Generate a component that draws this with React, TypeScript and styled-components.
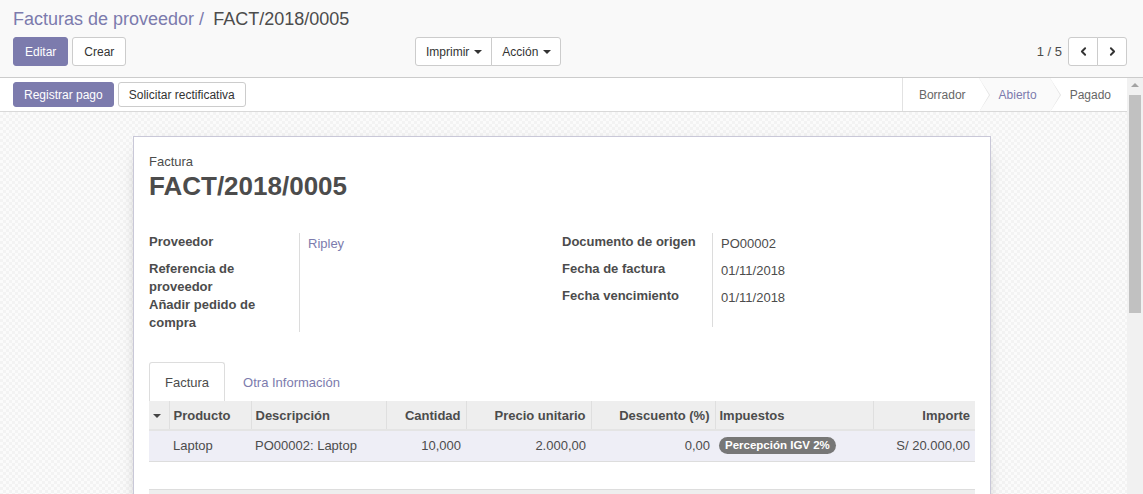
import React from "react";
import styled, { createGlobalStyle } from "styled-components";
import { ChevronLeft, ChevronRight } from "lucide-react";

const GlobalStyle = createGlobalStyle`
  html, body {
    margin: 0;
    padding: 0;
    height: 100%;
    overflow: hidden;
  }
  body {
    font-family: "Liberation Sans", Arial, sans-serif;
    font-size: 13px;
    color: #4c4c4c;
    background: #fff;
  }
  * { box-sizing: border-box; }
`;

const primary = "#7c7bad";

const Page = styled.div`
  height: 100vh;
  display: flex;
  flex-direction: column;
  overflow: hidden;
`;

const ControlPanel = styled.div`
  background: #f9f9f9;
  border-bottom: 1px solid #cccccc;
  padding: 7px 16px 11px 13px;
  flex: 0 0 auto;
`;

const Breadcrumb = styled.div`
  font-size: 18px;
  line-height: 24px;
  height: 24px;
  white-space: nowrap;
`;

const Crumb = styled.span<{ $active?: boolean }>`
  color: ${(p) => (p.$active ? "#4c4c4c" : primary)};
`;

const CrumbSep = styled.span`
  color: ${primary};
  padding: 0 9px 0 5px;
`;

const ButtonRow = styled.div`
  margin-top: 6px;
  display: grid;
  grid-template-columns: 402px auto 1fr auto;
  align-items: center;
  height: 29px;
`;

const Group = styled.div`
  display: flex;
  gap: 4px;
`;

const Btn = styled.button<{ $primary?: boolean; $small?: boolean }>`
  font-family: inherit;
  font-size: 12px;
  height: ${(p) => (p.$small ? "25px" : "29px")};
  padding: ${(p) => (p.$small ? "0 10px" : "0 11px")};
  border-radius: 3px;
  border: 1px solid ${(p) => (p.$primary ? primary : "#cccccc")};
  background: ${(p) => (p.$primary ? primary : "#ffffff")};
  color: ${(p) => (p.$primary ? "#ffffff" : "#333333")};
  display: inline-flex;
  align-items: center;
  gap: 4px;
  cursor: pointer;
  white-space: nowrap;
`;

const BtnGroup = styled.div`
  display: flex;
  & > button {
    border-radius: 0;
  }
  & > button + button {
    margin-left: -1px;
  }
  & > button:first-child {
    border-radius: 3px 0 0 3px;
  }
  & > button:last-child {
    border-radius: 0 3px 3px 0;
  }
`;

const Caret = styled.span`
  display: inline-block;
  width: 0;
  height: 0;
  margin-left: 1px;
  border-top: 4px solid #333;
  border-left: 4px solid transparent;
  border-right: 4px solid transparent;
`;

const DropBtn = styled(Btn)`
  padding: 0 9px 0 10px;
`;

const Pager = styled.div`
  grid-column: 4;
  display: flex;
  align-items: center;
  gap: 6px;
  color: #4c4c4c;
`;

const PagerBtn = styled(Btn)`
  width: 30px;
  padding: 0;
  justify-content: center;
`;

const Body = styled.div`
  flex: 1;
  display: flex;
  min-height: 0;
`;

const Main = styled.div`
  flex: 1;
  display: flex;
  flex-direction: column;
  min-width: 0;
`;

const StatusBar = styled.div`
  height: 34px;
  border-bottom: 1px solid #d9d9d9;
  background: #ffffff;
  display: flex;
  align-items: center;
  justify-content: space-between;
  padding-left: 13px;
`;

const StatusSteps = styled.div`
  display: flex;
  height: 100%;
  border-left: 1px solid #e2e2e2;
`;

const Step = styled.div<{ $current?: boolean; $last?: boolean }>`
  position: relative;
  display: flex;
  align-items: center;
  height: 100%;
  padding: ${(p) => (p.$last ? "0 16px 0 22px" : "0 13px 0 16px")};
  font-size: 12px;
  color: ${(p) => (p.$current ? primary : "#666666")};
  background: ${(p) => (p.$current ? "#fafafa" : "#ffffff")};
  & + & {
    padding-left: 20px;
  }
  ${(p) =>
    !p.$last &&
    `
    &::after, &::before {
      content: "";
      position: absolute;
      top: 0;
      width: 0;
      height: 0;
      border-top: 17px solid transparent;
      border-bottom: 17px solid transparent;
      z-index: 1;
    }
    &::before {
      right: -11px;
      border-left: 11px solid #e2e2e2;
    }
    &::after {
      right: -10px;
      border-left: 10px solid ${p.$current ? "#fafafa" : "#ffffff"};
    }
  `}
`;

const SheetBg = styled.div`
  flex: 1;
  padding: 24px 3px 0 0;
  background-color: #fafafa;
  background-image: repeating-conic-gradient(#f3f3f3 0 25%, #fbfbfb 0 50%);
  background-size: 6px 6px;
  overflow: hidden;
`;

const Sheet = styled.div`
  width: 858px;
  margin: 0 auto;
  min-height: 500px;
  background: #ffffff;
  border: 1px solid #c9c8d8;
  box-shadow: 0 5px 20px -15px #000;
  padding: 16px 15px 0 15px;
`;

const DocType = styled.div`
  font-size: 13px;
  line-height: 18px;
`;

const DocTitle = styled.h1`
  margin: 0;
  font-size: 26px;
  line-height: 30px;
  font-weight: bold;
  color: #4c4c4c;
`;

const Groups = styled.div`
  margin-top: 32px;
  display: grid;
  grid-template-columns: 1fr 1fr;
`;

const FieldGroup = styled.div`
  display: grid;
  grid-template-columns: 150px 1fr;
  align-content: start;
`;

const Label = styled.div`
  font-weight: bold;
  line-height: 18px;
  padding-right: 10px;
`;

const Value = styled.div<{ $link?: boolean; $h?: number }>`
  border-left: 1px solid #dcdcdc;
  padding: 2px 0 0 8px;
  line-height: 18px;
  min-height: ${(p) => p.$h ?? 0}px;
  color: ${(p) => (p.$link ? primary : "#4c4c4c")};
`;

const Tabs = styled.div`
  margin-top: 30px;
  display: flex;
  height: 39px;
`;

const Tab = styled.div<{ $active?: boolean }>`
  display: flex;
  align-items: center;
  padding: 0 15px 0 15px;
  margin-right: 2px;
  border: 1px solid ${(p) => (p.$active ? "#dddddd" : "transparent")};
  border-bottom: none;
  border-radius: 3px 3px 0 0;
  background: #ffffff;
  color: ${(p) => (p.$active ? "#4c4c4c" : primary)};
`;

const Table = styled.table`
  width: 100%;
  border-collapse: collapse;
  table-layout: fixed;
`;

const Th = styled.th<{ $right?: boolean; $w: number }>`
  width: ${(p) => p.$w}px;
  height: 29px;
  background: #eeeeee;
  border-bottom: 2px solid #e4e4e4;
  border-left: 1px solid #dfdfdf;
  text-align: ${(p) => (p.$right ? "right" : "left")};
  padding: 0 5px 0 4px;
  font-weight: bold;
  white-space: nowrap;
  &:first-child {
    border-left: none;
  }
`;

const Td = styled.td<{ $right?: boolean }>`
  height: 31px;
  padding: 0 5px 0 4px;
  text-align: ${(p) => (p.$right ? "right" : "left")};
  white-space: nowrap;
`;

const DataRow = styled.tr`
  background: #eeeef6;
  border-bottom: 1px solid #dddddd;
`;

const EmptyRow = styled.tr`
  height: 28px;
`;

const FooterRow = styled.tr`
  height: 28px;
  background: #eeeeee;
  border-top: 1px solid #dddddd;
`;

const HeadCaret = styled(Caret)`
  margin: 0 0 2px 0;
  border-top-color: #444;
`;

const Badge = styled.span`
  display: inline-block;
  background: #777777;
  color: #ffffff;
  font-size: 11.5px;
  font-weight: bold;
  line-height: 17px;
  padding: 0 6px;
  border-radius: 9px;
`;

const ScrollTrack = styled.div`
  width: 16px;
  flex: 0 0 16px;
  background: #f1f1f1;
  display: flex;
  flex-direction: column;
  align-items: center;
`;

const ScrollArrow = styled.div`
  margin-top: 5px;
  width: 0;
  height: 0;
  border-bottom: 4px solid #a3a3a3;
  border-left: 4px solid transparent;
  border-right: 4px solid transparent;
`;

const ScrollThumb = styled.div`
  margin-top: 8px;
  width: 12px;
  height: 218px;
  background: #c1c1c1;
`;

const columns = [
  { key: "caret", label: "", w: 20 },
  { key: "product", label: "Producto", w: 82 },
  { key: "desc", label: "Descripción", w: 135 },
  { key: "qty", label: "Cantidad", w: 80, right: true },
  { key: "price", label: "Precio unitario", w: 125, right: true },
  { key: "disc", label: "Descuento (%)", w: 124, right: true },
  { key: "tax", label: "Impuestos", w: 158 },
  { key: "amount", label: "Importe", w: 102, right: true },
];

export default function App() {
  return (
    <Page>
      <GlobalStyle />
      <ControlPanel>
        <Breadcrumb>
          <Crumb>Facturas de proveedor</Crumb>
          <CrumbSep>/</CrumbSep>
          <Crumb $active>FACT/2018/0005</Crumb>
        </Breadcrumb>
        <ButtonRow>
          <Group>
            <Btn $primary>Editar</Btn>
            <Btn>Crear</Btn>
          </Group>
          <BtnGroup>
            <DropBtn>
              Imprimir <Caret />
            </DropBtn>
            <DropBtn>
              Acción <Caret />
            </DropBtn>
          </BtnGroup>
          <Pager>
            <span>1 / 5</span>
            <BtnGroup>
              <PagerBtn>
                <ChevronLeft size={13} strokeWidth={3.5} color="#333" />
              </PagerBtn>
              <PagerBtn>
                <ChevronRight size={13} strokeWidth={3.5} color="#333" />
              </PagerBtn>
            </BtnGroup>
          </Pager>
        </ButtonRow>
      </ControlPanel>
      <Body>
        <Main>
          <StatusBar>
            <Group>
              <Btn $primary $small>
                Registrar pago
              </Btn>
              <Btn $small>Solicitar rectificativa</Btn>
            </Group>
            <StatusSteps>
              <Step>Borrador</Step>
              <Step $current>Abierto</Step>
              <Step $last>Pagado</Step>
            </StatusSteps>
          </StatusBar>
          <SheetBg>
            <Sheet>
              <DocType>Factura</DocType>
              <DocTitle>FACT/2018/0005</DocTitle>
              <Groups>
                <FieldGroup>
                  <Label>Proveedor</Label>
                  <Value $link $h={27}>
                    Ripley
                  </Value>
                  <Label>Referencia de proveedor</Label>
                  <Value />
                  <Label>Añadir pedido de compra</Label>
                  <Value />
                </FieldGroup>
                <FieldGroup>
                  <Label>Documento de origen</Label>
                  <Value $h={27}>PO00002</Value>
                  <Label>Fecha de factura</Label>
                  <Value $h={27}>01/11/2018</Value>
                  <Label>Fecha vencimiento</Label>
                  <Value $h={27}>01/11/2018</Value>
                  <Label />
                  <Value $h={13} />
                </FieldGroup>
              </Groups>
              <Tabs>
                <Tab $active>Factura</Tab>
                <Tab>Otra Información</Tab>
              </Tabs>
              <Table>
                <thead>
                  <tr>
                    {columns.map((c) => (
                      <Th key={c.key} $w={c.w} $right={c.right}>
                        {c.key === "caret" ? <HeadCaret /> : c.label}
                      </Th>
                    ))}
                  </tr>
                </thead>
                <tbody>
                  <DataRow>
                    <Td />
                    <Td>Laptop</Td>
                    <Td>PO00002: Laptop</Td>
                    <Td $right>10,000</Td>
                    <Td $right>2.000,00</Td>
                    <Td $right>0,00</Td>
                    <Td>
                      <Badge>Percepción IGV 2%</Badge>
                    </Td>
                    <Td $right>S/ 20.000,00</Td>
                  </DataRow>
                  <EmptyRow>
                    <td colSpan={8} />
                  </EmptyRow>
                  <FooterRow>
                    <td colSpan={8} />
                  </FooterRow>
                </tbody>
              </Table>
            </Sheet>
          </SheetBg>
        </Main>
        <ScrollTrack>
          <ScrollArrow />
          <ScrollThumb />
        </ScrollTrack>
      </Body>
    </Page>
  );
}
